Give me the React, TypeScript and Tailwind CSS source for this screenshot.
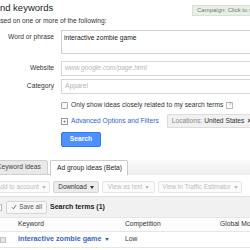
import React from 'react';

function Caret() {
    return <span className="inline-block ml-[3px] w-0 h-0 border-x-[2.5px] border-t-[3px] border-x-transparent border-t-current align-middle" />;
}

function ToolButton({ label, width, active }: { label: string; width: string; active?: boolean }) {
    return (
        <div
            className={`${width} h-[12px] flex items-center justify-center rounded-[2px] border text-[6.4px] whitespace-nowrap ${
                active ? 'bg-[#ececec] border-[#d4d4d4] text-[#333]' : 'bg-[#fbfbfb] border-[#e6e6e6] text-[#bdbdbd]'
            }`}
        >
            {label}
            <Caret />
        </div>
    );
}

export default function App() {
    return (
        <div className="w-[250px] h-[250px] overflow-hidden bg-white font-['Liberation_Sans',Arial,sans-serif] text-[#222]">
            <div className="-ml-2 w-[270px]">
                {/* Header */}
                <div className="flex h-[28px]">
                    <div className="w-[200px] shrink-0 pt-[2px]">
                        <div className="text-[9.5px] leading-[12px] whitespace-nowrap">Find keywords</div>
                        <div className="mt-[3px] text-[6.7px] leading-[8px] text-[#333] whitespace-nowrap">Based on one or more of the following:</div>
                    </div>
                    <div className="mt-[5px] h-[11px] px-[4px] flex items-center bg-[#e7f0e7] border border-[#d5e2d5] text-[6px] text-[#777] whitespace-nowrap">
                        Campaign: Click to select
                    </div>
                </div>

                {/* Form */}
                <div className="mt-[2px] grid grid-cols-[62px_1fr] gap-x-[7px]">
                    <div className="pt-[3px] text-right text-[6.7px] leading-[8px] text-[#333] whitespace-nowrap">Word or phrase</div>
                    <div className="w-[200px] h-[24px] border border-[#cfcfcf] px-[2px] pt-[3px] text-[6.7px] leading-[8px] text-[#222]">interactive zombie game</div>

                    <div className="mt-[7px] h-[15px] flex items-center justify-end text-[6.7px] text-[#333]">Website</div>
                    <div className="mt-[7px] w-[200px] h-[15px] border border-[#d6d6d6] px-[3px] flex items-center text-[6.7px] text-[#b5b5b5] italic whitespace-nowrap">www.google.com/page.html</div>

                    <div className="mt-[3px] h-[15px] flex items-center justify-end text-[6.7px] text-[#333]">Category</div>
                    <div className="mt-[3px] w-[200px] h-[15px] border border-[#d6d6d6] px-[3px] flex items-center text-[6.7px] text-[#b5b5b5]">Apparel</div>

                    <div />
                    <div className="mt-[7px] h-[8px] flex items-center text-[6.7px] text-[#333] whitespace-nowrap">
                        <span className="w-[7px] h-[7px] border border-[#a9a9a9] bg-[#f6f6f6] rounded-[1px]" />
                        <span className="ml-[3px]">Only show ideas closely related to my search terms</span>
                        <span className="ml-[3px] w-[7px] h-[7px] border border-[#bdbdbd] flex items-center justify-center text-[5px] text-[#888]">?</span>
                    </div>

                    <div />
                    <div className="mt-[5px] h-[14px] flex items-center text-[6.7px] whitespace-nowrap">
                        <span className="w-[7px] h-[7px] border border-[#9a9a9a] flex items-center justify-center text-[6px] leading-none text-[#555]">+</span>
                        <span className="ml-[3px] text-[#3366cc]">Advanced Options and Filters</span>
                        <span className="ml-[8px] h-[14px] px-[4px] flex items-center bg-[#f1f1f1] border border-[#dcdcdc] rounded-[1px]">
                            <span className="text-[#888]">Locations:</span>
                            <span className="ml-[2px] text-[#333]">United States</span>
                            <span className="ml-[3px] font-bold text-[#333]">×</span>
                        </span>
                        <span className="ml-[3px] h-[14px] px-[4px] flex items-center bg-[#f1f1f1] border border-[#dcdcdc] rounded-[1px] text-[#888]">Languages</span>
                    </div>

                    <div />
                    <div className="mt-[4px] w-[40px] h-[15px] flex items-center justify-center rounded-[2px] bg-[#4d90fe] border border-[#3079ed] text-[6.7px] font-bold text-white">Search</div>
                </div>

                {/* Tabs */}
                <div className="mt-[13px] flex h-[15px] border-b border-[#cccccc]">
                    <div className="w-[56px] h-[15px] pl-[4px] flex items-center rounded-t-[2px] border border-[#d0d0d0] bg-[#e9e9e9] text-[6.7px] text-[#444] whitespace-nowrap">Keyword ideas</div>
                    <div className="ml-[2px] w-[78px] h-[16px] pl-[6px] flex items-center rounded-t-[2px] border border-[#cccccc] border-b-white bg-white text-[6.7px] text-[#222] whitespace-nowrap">Ad group ideas (Beta)</div>
                    <div className="flex-1 h-[15px] bg-gradient-to-b from-[#fbfbfb] to-[#eeeeee]" />
                </div>

                {/* Toolbar */}
                <div className="h-[21px] pt-[6px] flex gap-[3px]">
                    <ToolButton label="Add to account" width="w-[58px]" />
                    <ToolButton label="Download" width="w-[46px]" active />
                    <ToolButton label="View as text" width="w-[53px]" />
                    <ToolButton label="View in Traffic Estimator" width="w-[84px]" />
                </div>

                {/* Search terms bar */}
                <div className="h-[21px] flex items-center bg-[#f1f1f1] border-t border-[#e0e0e0]">
                    <span className="ml-[4px] w-[6px] h-[7px] border border-[#bbbbbb] bg-white" />
                    <div className="ml-[4px] w-[41px] h-[13px] flex items-center justify-center rounded-[2px] border border-[#d6d6d6] bg-[#f7f7f7] text-[6.4px] text-[#555]">
                        <svg width="6" height="6" viewBox="0 0 10 10" className="mr-[2px]">
                            <path d="M1.5 5.5 L4 8 L8.5 2" fill="none" stroke="#555" strokeWidth="1.4" />
                        </svg>
                        Save all
                    </div>
                    <span className="ml-[3px] text-[7px] font-bold text-[#222] whitespace-nowrap">Search terms (1)</span>
                </div>

                {/* Table */}
                <div className="grid grid-cols-[26px_107px_95px_1fr] h-[15px] items-center border-t border-[#e2e2e2] border-b border-[#e6e6e6] bg-[#fcfcfc] text-[6.7px] text-[#333] whitespace-nowrap">
                    <div />
                    <div>Keyword</div>
                    <div>Competition</div>
                    <div>Global Monthly Searches</div>
                </div>
                <div className="grid grid-cols-[26px_107px_95px_1fr] h-[16px] items-center border-b border-[#e6e6e6] text-[6.7px] whitespace-nowrap">
                    <div className="pl-[8px]">
                        <div className="w-[6px] h-[6px] border border-[#c4c4c4] bg-[#e4e4e4]" />
                    </div>
                    <div className="text-[7.2px] font-bold text-[#3a66c8] flex items-center">
                        interactive zombie game
                        <Caret />
                    </div>
                    <div className="text-[#333]">Low</div>
                    <div />
                </div>
            </div>
        </div>
    );
}
